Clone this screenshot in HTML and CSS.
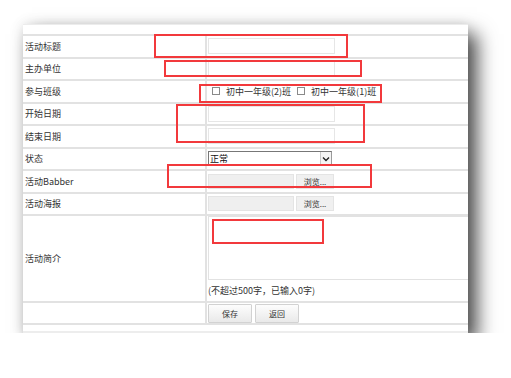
FILE: index.html
```html
<!DOCTYPE html>
<html lang="zh-CN">
<head>
    <meta charset="UTF-8">
    <title>活动编辑</title>
    <link rel="stylesheet" href="styles.css">
</head>
<body>
    <div class="panel">
        <div class="top-strip"></div>

        <div class="row">
            <div class="label">活动标题</div>
            <div class="field"><input type="text" class="text-input"></div>
        </div>
        <div class="row">
            <div class="label">主办单位</div>
            <div class="field"><input type="text" class="text-input"></div>
        </div>
        <div class="row">
            <div class="label">参与班级</div>
            <div class="field">
                <label class="check"><input type="checkbox">初中一年级(2)班</label>
                <label class="check"><input type="checkbox">初中一年级(1)班</label>
            </div>
        </div>
        <div class="row">
            <div class="label">开始日期</div>
            <div class="field"><input type="text" class="text-input"></div>
        </div>
        <div class="row">
            <div class="label">结束日期</div>
            <div class="field"><input type="text" class="text-input"></div>
        </div>
        <div class="row">
            <div class="label">状态</div>
            <div class="field">
                <div class="select-box">
                    <select>
                        <option>正常</option>
                        <option>关闭</option>
                    </select>
                    <span class="select-arrow">
                        <svg width="8" height="6" viewBox="0 0 8 6"><path d="M1 1.5 L4 4.5 L7 1.5" fill="none" stroke="#222" stroke-width="1.4"/></svg>
                    </span>
                </div>
            </div>
        </div>
        <div class="row">
            <div class="label">活动Babber</div>
            <div class="field">
                <span class="file-path"></span><button class="file-btn">浏览...</button>
            </div>
        </div>
        <div class="row">
            <div class="label">活动海报</div>
            <div class="field">
                <span class="file-path"></span><button class="file-btn">浏览...</button>
            </div>
        </div>
        <div class="row row-intro">
            <div class="label">活动简介</div>
            <div class="field field-intro">
                <textarea></textarea>
                <div class="count">(不超过500字，已输入0字)</div>
            </div>
        </div>
        <div class="row row-last">
            <div class="label"></div>
            <div class="field">
                <button class="btn">保存</button>
                <button class="btn">返回</button>
            </div>
        </div>

        <!-- red marks -->
        <div class="mark mark-title"></div>
        <div class="mark mark-org"></div>
        <div class="mark mark-class"></div>
        <div class="mark mark-date"></div>
        <div class="mark mark-banner"></div>
        <div class="mark mark-intro"></div>
    </div>
</body>
</html>
```

FILE: styles.css
```css
body {
    margin: 0;
    background-color: #ffffff;
    font-family: "Noto Sans CJK SC", "Liberation Sans", sans-serif;
    font-size: 9px;
    color: #333333;
}
.panel {
    position: relative;
    margin: 24px 0 0 23px;
    width: 445px;
    height: 309px;
    background-color: #ffffff;
    border-top: 1px solid #ececec;
    border-bottom: 2px solid #ededed;
    box-sizing: border-box;
    overflow: hidden;
    box-shadow: 9px 10px 18px rgba(0, 0, 0, 0.7), 0 0 12px rgba(0, 0, 0, 0.1);
}
.top-strip {
    height: 9px;
}
.row {
    display: flex;
    height: 22.5px;
    border-top: 2px solid #e2e2e2;
    box-sizing: border-box;
}
.row-last {
    height: 24px;
    border-bottom: 2px solid #e2e2e2;
}
.row-intro {
    height: 87px;
}
.label {
    width: 184px;
    flex-shrink: 0;
    padding-left: 2px;
    border-right: 2px solid #e2e2e2;
    box-sizing: border-box;
    display: flex;
    align-items: center;
}
.field {
    flex: 1;
    display: flex;
    align-items: center;
    padding-left: 1px;
    white-space: nowrap;
}
.text-input {
    width: 127px;
    height: 16px;
    margin: 0;
    padding: 0 2px;
    border: 1px solid #e6e6e6;
    box-sizing: border-box;
}
.check {
    display: flex;
    align-items: center;
    margin-right: 2px;
}
.check input {
    appearance: none;
    width: 8px;
    height: 8px;
    margin: 0 6px 0 4px;
    border: 1px solid #8a8a8a;
    background-color: #fff;
}
.select-box {
    display: flex;
    width: 124px;
    height: 15px;
    border: 1px solid #9a9a9a;
    border-top-color: #777;
    border-left-color: #777;
    box-sizing: border-box;
    background-color: #fff;
}
.select-box select {
    appearance: none;
    flex: 1;
    border: none;
    padding: 0 1px;
    margin: 0;
    font-family: inherit;
    font-size: 9px;
    color: #111;
    background: transparent;
    outline: none;
}
.select-arrow {
    width: 10px;
    display: flex;
    align-items: center;
    justify-content: center;
    border-left: 1px solid #c8c8c8;
    background-color: #f4f4f4;
}
.file-path {
    width: 86px;
    height: 15px;
    background-color: #efefef;
    border: 1px solid #e4e4e4;
    box-sizing: border-box;
}
.file-btn {
    width: 38px;
    height: 15px;
    margin: 0 0 0 2px;
    padding: 0;
    font-family: inherit;
    font-size: 8px;
    color: #333;
    background-color: #f0f0f0;
    border: 1px solid #e4e4e4;
}
.field-intro {
    flex-direction: column;
    align-items: flex-start;
}
.field-intro textarea {
    width: 270px;
    height: 64px;
    margin: 0;
    padding: 0;
    border: 1px solid #e2e2e2;
    box-sizing: border-box;
    resize: none;
}
.count {
    margin-top: 4px;
}
.btn {
    width: 44px;
    height: 19px;
    margin: 0 3px 0 0;
    padding: 0;
    font-family: inherit;
    font-size: 8px;
    color: #333;
    background: linear-gradient(#fdfdfd, #e9e9e9);
    border: 1px solid #d2d2d2;
    border-radius: 1px;
}
.mark {
    position: absolute;
    border: 2px solid #f2393c;
    box-sizing: border-box;
}
.mark-title {
    left: 131px;
    top: 9px;
    width: 194px;
    height: 24px;
}
.mark-org {
    left: 141px;
    top: 35px;
    width: 198px;
    height: 17px;
}
.mark-class {
    left: 176px;
    top: 59px;
    width: 183px;
    height: 19px;
}
.mark-date {
    left: 153px;
    top: 79px;
    width: 189px;
    height: 39px;
}
.mark-banner {
    left: 144px;
    top: 139px;
    width: 205px;
    height: 24px;
}
.mark-intro {
    left: 189px;
    top: 194px;
    width: 112px;
    height: 25px;
}
```
